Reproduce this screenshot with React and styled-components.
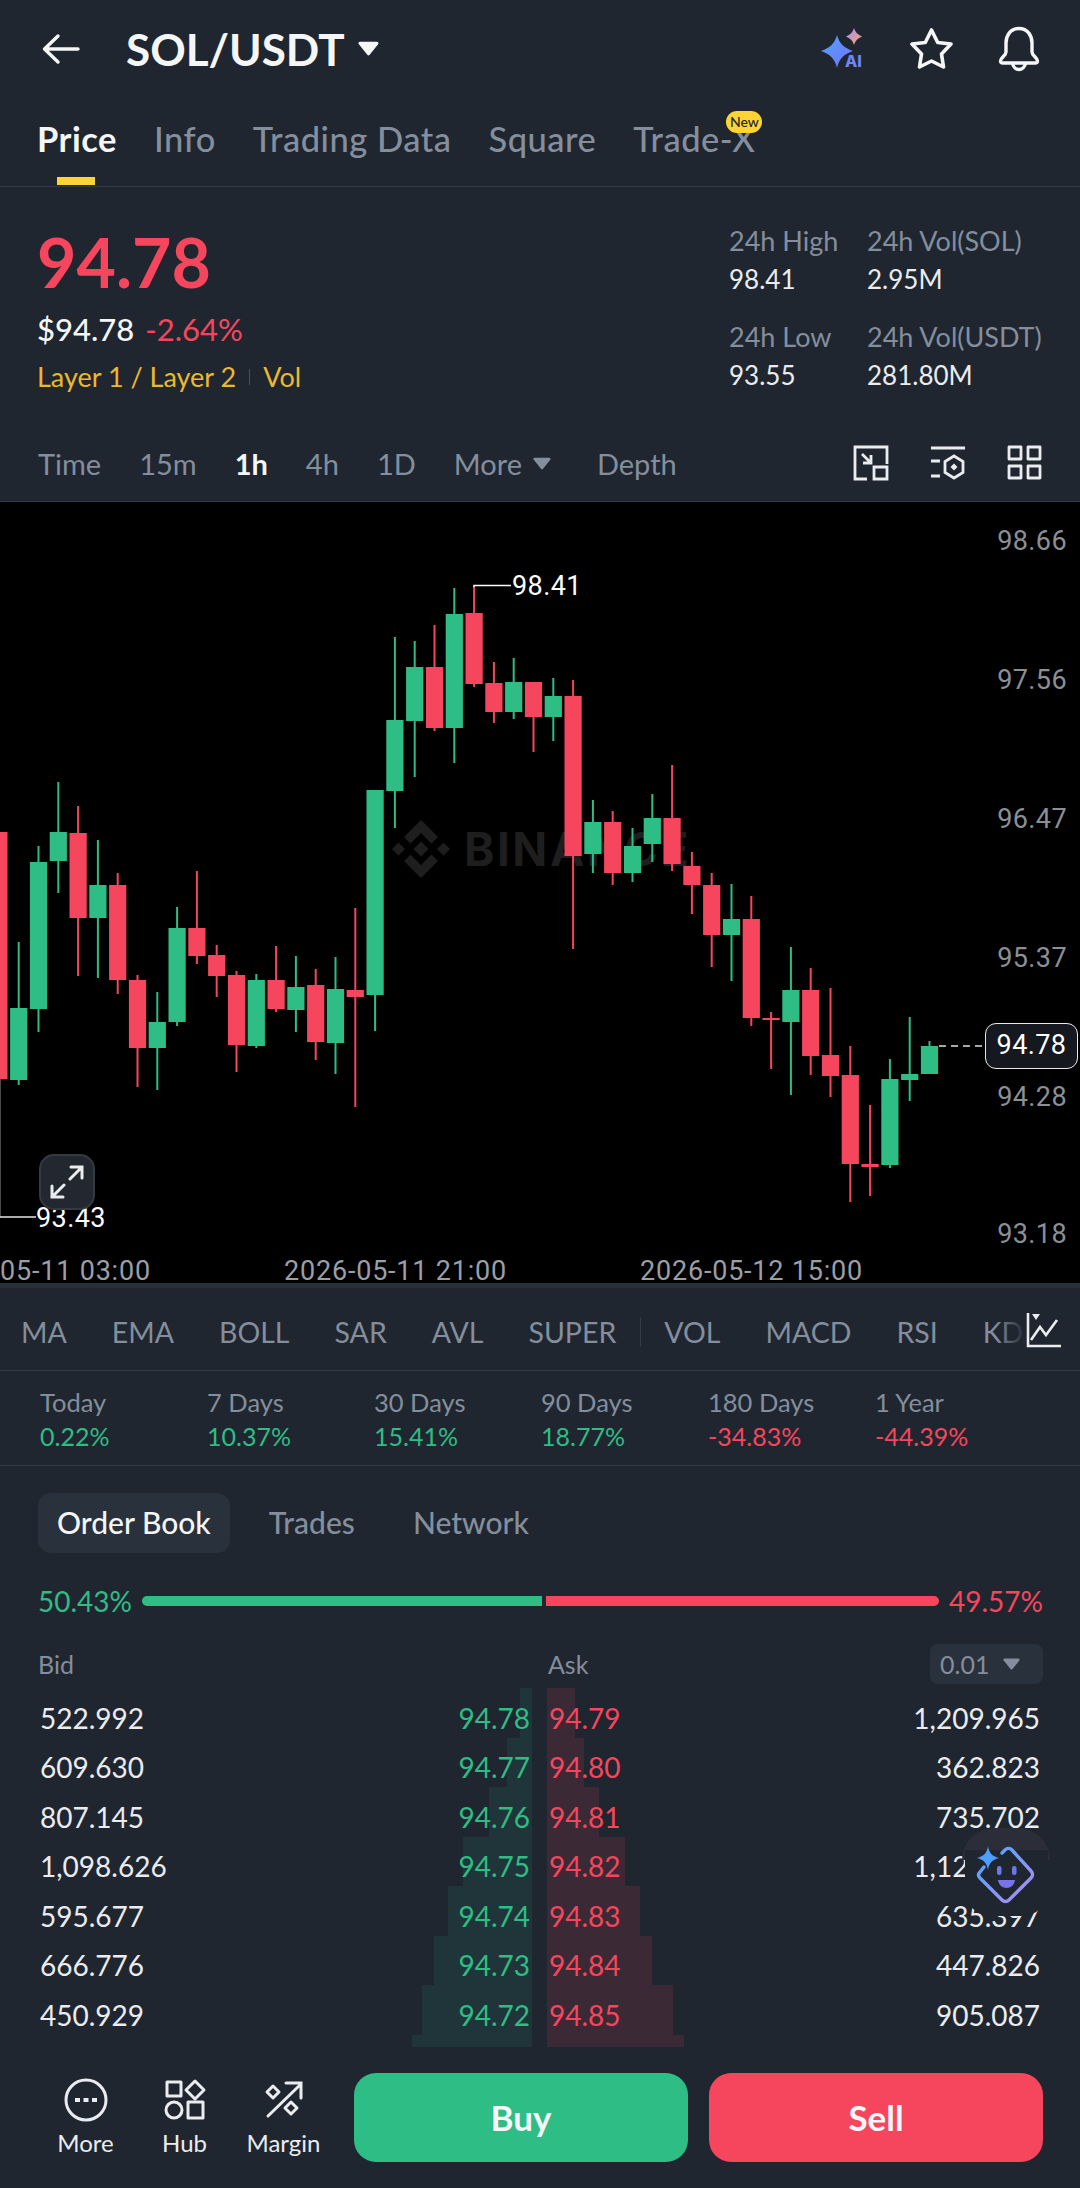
import React from "react";
import styled, { createGlobalStyle } from "styled-components";

const BG = "#1f2630";
const LINE = "#333b47";
const GREY = "#848e9c";
const WHITE = "#eaecef";
const GREEN = "#2ebd85";
const RED = "#f6465d";

const GlobalStyle = createGlobalStyle`
  html, body { margin: 0; padding: 0; background: ${BG}; }
  * { box-sizing: border-box; }
`;

const Page = styled.div`
  width: 1080px;
  height: 2188px;
  overflow: hidden;
  background: ${BG};
  color: ${WHITE};
  font-family: Lato, "Noto Sans", sans-serif;
  display: flex;
  flex-direction: column;
`;

/* header */
const Header = styled.header`
  height: 97px;
  display: flex;
  align-items: center;
  padding: 0 38px 0 42px;
`;
const Title = styled.h1`
  margin: 0 0 0 46px;
  font-size: 44px;
  font-weight: 700;
  color: #f5f6f7;
`;
const Caret = styled.svg`
  display: block;
  margin-left: ${(p) => p.$gap || 0}px;
`;
const HeaderIcons = styled.div`
  margin-left: auto;
  display: flex;
  align-items: center;
`;
const TopTabs = styled.nav`
  height: 90px;
  display: flex;
  align-items: center;
  gap: 37px;
  padding: 0 37px 6px;
  border-bottom: 1px solid ${LINE};
`;
const TopTab = styled.div`
  position: relative;
  font-size: 34.5px;
  letter-spacing: 0.5px;
  font-weight: ${(p) => (p.$active ? 700 : 500)};
  color: ${(p) => (p.$active ? "#f5f6f7" : GREY)};
  &::after {
    content: "";
    display: ${(p) => (p.$active ? "block" : "none")};
    position: absolute;
    left: 20px;
    width: 38px;
    height: 8px;
    bottom: -26px;
    background: #fcd535;
  }
`;
const NewBadge = styled.span`
  position: absolute;
  top: -7px;
  right: -7px;
  width: 36px;
  height: 22px;
  border-radius: 11px;
  background: #fcd535;
  color: #202630;
  font-size: 14px;
  font-weight: 500;
  letter-spacing: 0;
  line-height: 22px;
  text-align: center;
`;

/* price summary */
const Summary = styled.section`
  height: 240px;
  padding: 40px 37px 0 37px;
  display: flex;
  justify-content: space-between;
  align-items: flex-start;
`;
const BigPrice = styled.div`
  font-size: 68px;
  font-weight: 700;
  line-height: 70px;
  color: ${RED};
`;
const SubLine = styled.div`
  margin-top: 14px;
  display: flex;
  gap: 11px;
  font-size: 31px;
  line-height: 36px;
`;
const Usd = styled.span`
  color: #f5f6f7;
  font-weight: 500;
`;
const Change = styled.span`
  color: ${RED};
`;
const TagLine = styled.div`
  margin-top: 12px;
  display: flex;
  align-items: center;
  font-size: 27px;
  line-height: 36px;
  color: #ecb92e;
`;
const TagSep = styled.span`
  width: 1px;
  height: 16px;
  margin: 0 13px;
  background: #4a4f55;
`;
const Stats = styled.div`
  margin-top: -2px;
  display: grid;
  grid-template-columns: 138px 176px;
  row-gap: 26px;
`;
const StatLabel = styled.div`
  font-size: 27px;
  line-height: 32px;
  color: ${GREY};
  white-space: nowrap;
`;
const StatValue = styled.div`
  margin-top: 6px;
  font-size: 26px;
  line-height: 32px;
  color: ${WHITE};
`;

/* time selector */
const TimeBar = styled.div`
  height: 75px;
  padding: 0 38px 2px 38px;
  display: flex;
  align-items: center;
  gap: 38px;
  border-bottom: 1px solid ${LINE};
  font-size: 29px;
`;
const TimeItem = styled.div`
  display: flex;
  align-items: center;
  gap: 11px;
  margin-left: ${(p) => p.$offset || 0}px;
  color: ${(p) => (p.$active ? "#f5f6f7" : GREY)};
  font-weight: ${(p) => (p.$active ? 700 : 400)};
`;
const TimeIcons = styled.div`
  margin-left: auto;
  display: flex;
  gap: 41px;
  align-items: center;
`;

/* chart */
const ChartWrap = styled.div`
  position: relative;
  height: 781px;
  background: #000;
  overflow: hidden;
`;
const ChartSvg = styled.svg`
  display: block;
`;
const AxisText = styled.text`
  font-family: Roboto, sans-serif;
  font-size: 27px;
  letter-spacing: ${(p) => p.$spacing || 0.4}px;
  fill: ${(p) => p.$fill || "#8c8f94"};
`;
const WatermarkText = styled.text`
  font-family: Inter, sans-serif;
  font-size: 46px;
  font-weight: 700;
  letter-spacing: 2.5px;
  fill: #1e1e1e;
`;
const LastPrice = styled.div`
  position: absolute;
  left: 985px;
  top: 521px;
  width: 93px;
  height: 46px;
  border: 1.5px solid #e8e8e8;
  border-radius: 11px;
  background: #15191f;
  color: #fff;
  font-family: Roboto, sans-serif;
  font-size: 27px;
  letter-spacing: 0.4px;
  line-height: 43px;
  text-align: center;
`;
const ExpandButton = styled.div`
  position: absolute;
  left: 39px;
  top: 652px;
  width: 56px;
  height: 56px;
  border-radius: 15px;
  border: 2px solid #353a42;
  background: #23272f;
  display: flex;
  align-items: center;
  justify-content: center;
`;

/* indicators */
const IndicatorBar = styled.div`
  position: relative;
  height: 88px;
  padding: 5px 0 0 21px;
  display: flex;
  align-items: center;
  gap: 45px;
  overflow: hidden;
  border-top: 5px solid #282f38;
  border-bottom: 1px solid ${LINE};
  font-size: 28.5px;
  color: ${GREY};
  white-space: nowrap;
`;
const IndicatorSep = styled.span`
  flex: none;
  width: 1px;
  height: 30px;
  margin: 0 -21.5px;
  background: ${LINE};
`;
const IndicatorEnd = styled.div`
  position: absolute;
  right: 0;
  top: 0;
  bottom: 0;
  width: 84px;
  padding: 1px 0 0 30px;
  display: flex;
  align-items: center;
  background: linear-gradient(90deg, rgba(31, 38, 48, 0), ${BG} 30px);
`;

/* returns */
const Returns = styled.div`
  height: 95px;
  padding: 14px 0 0 40px;
  display: grid;
  grid-template-columns: repeat(6, 167px);
  border-bottom: 1px solid ${LINE};
`;
const ReturnLabel = styled.div`
  font-size: 25.5px;
  line-height: 34px;
  color: ${GREY};
`;
const ReturnValue = styled.div`
  font-size: 25px;
  line-height: 34px;
  color: ${(p) => (p.$down ? RED : GREEN)};
`;

/* order book */
const BookTabs = styled.div`
  height: 88px;
  padding: 27px 38px 0;
  display: flex;
  align-items: flex-start;
  gap: 20px;
`;
const BookTab = styled.div`
  height: 60px;
  padding: 0 19px;
  border-radius: 13px;
  background: ${(p) => (p.$active ? "#29313d" : "transparent")};
  color: ${(p) => (p.$active ? "#f5f6f7" : GREY)};
  font-size: 30px;
  font-weight: 500;
  line-height: 58px;
`;
const Ratio = styled.div`
  margin-top: 29px;
  padding: 0 37px 0 38px;
  height: 36px;
  display: flex;
  align-items: center;
  font-size: 28px;
`;
const RatioText = styled.span`
  color: ${(p) => p.$color};
`;
const RatioBar = styled.div`
  flex: 1;
  margin: 0 10px;
  display: flex;
  gap: 4px;
`;
const RatioFill = styled.div`
  height: 10px;
  background: ${(p) => p.$color};
  border-radius: ${(p) => (p.$left ? "5px 0 0 5px" : "0 5px 5px 0")};
`;
const BookHead = styled.div`
  margin-top: 25px;
  height: 40px;
  padding: 0 37px 0 38px;
  display: flex;
  align-items: center;
  font-size: 25px;
  color: ${GREY};
`;
const AskHead = styled.span`
  margin-left: 474px;
  margin-right: auto;
`;
const Select = styled.div`
  width: 113px;
  height: 40px;
  padding: 0 10px;
  border-radius: 8px;
  background: #29313d;
  display: flex;
  align-items: center;
  gap: 14px;
`;
const Book = styled.div`
  position: relative;
  margin-top: 9px;
  height: 354px;
  padding: 0 40px 0 40px;
`;
const DepthLayer = styled.div`
  position: absolute;
  left: 0;
  right: 0;
  top: -5px;
  bottom: 0;
  overflow: hidden;
`;
const DepthRow = styled.div`
  position: relative;
  height: 49.5px;
`;
const DepthBar = styled.div`
  position: absolute;
  top: 0;
  bottom: 0;
  ${(p) => (p.$ask ? "left: 547px;" : "right: 548px;")}
  background: ${(p) => (p.$ask ? "rgba(246, 70, 93, 0.13)" : "rgba(46, 189, 133, 0.1)")};
`;
const BookRow = styled.div`
  position: relative;
  height: 49.5px;
  display: grid;
  grid-template-columns: 490px 491px;
  column-gap: 19px;
  align-items: center;
  font-size: 28px;
`;
const BookSide = styled.div`
  display: flex;
  justify-content: space-between;
`;
const BookPrice = styled.span`
  color: ${(p) => (p.$ask ? RED : GREEN)};
`;
const BotDome = styled.div`
  position: absolute;
  left: 962px;
  top: 1828px;
  width: 88px;
  height: 32px;
  border-radius: 44px 44px 0 0;
  background: #2b2e38;
`;
const BotBack = styled.div`
  position: absolute;
  left: 965px;
  top: 1850px;
  width: 83px;
  height: 66px;
  border-radius: 0 0 26px 26px;
  background: ${BG};
`;
const BotIcon = styled.svg`
  position: absolute;
  left: 976px;
  top: 1843px;
`;

/* footer */
const Footer = styled.footer`
  flex: 1;
  padding: 26px 37px 0 36px;
  display: flex;
`;
const Action = styled.div`
  width: 99px;
  padding-top: 5px;
  display: flex;
  flex-direction: column;
  align-items: center;
  font-size: 24px;
  line-height: 28px;
  color: ${WHITE};
`;
const ActionIcon = styled.svg`
  display: block;
  margin-bottom: 7px;
`;
const TradeButton = styled.div`
  flex: 1;
  height: 89px;
  margin-left: ${(p) => p.$gap}px;
  border-radius: 22px;
  background: ${(p) => p.$color};
  color: #f5f6f7;
  font-size: 35px;
  font-weight: 700;
  line-height: 89px;
  text-align: center;
`;

// [type, wick top, wick bottom, body top, body bottom], newest first
const candles = [
  ["g", 1041, 1074, 1046, 1074],
  ["g", 1017, 1101, 1074, 1080],
  ["g", 1059, 1168, 1079, 1165],
  ["r", 1105, 1196, 1164, 1167],
  ["r", 1046, 1202, 1075, 1164],
  ["r", 988, 1097, 1055, 1076],
  ["r", 968, 1075, 990, 1056],
  ["g", 947, 1095, 990, 1022],
  ["r", 1012, 1069, 1018, 1020],
  ["r", 896, 1026, 919, 1018],
  ["g", 884, 981, 919, 935],
  ["r", 873, 967, 885, 935],
  ["r", 852, 914, 866, 885],
  ["r", 765, 871, 818, 864],
  ["g", 794, 862, 818, 844],
  ["g", 828, 882, 846, 873],
  ["r", 811, 885, 822, 873],
  ["g", 800, 873, 822, 854],
  ["r", 680, 949, 696, 856],
  ["g", 678, 741, 696, 717],
  ["r", 682, 752, 682, 717],
  ["g", 658, 719, 682, 712],
  ["r", 662, 723, 683, 712],
  ["r", 586, 687, 613, 684],
  ["g", 588, 763, 614, 728],
  ["r", 625, 731, 667, 728],
  ["g", 641, 777, 667, 721],
  ["g", 637, 828, 720, 791],
  ["g", 790, 1031, 790, 995],
  ["r", 908, 1107, 990, 997],
  ["g", 957, 1074, 989, 1043],
  ["r", 969, 1060, 985, 1042],
  ["g", 956, 1032, 987, 1010],
  ["r", 946, 1012, 980, 1009],
  ["g", 974, 1048, 980, 1046],
  ["r", 971, 1072, 975, 1045],
  ["r", 945, 997, 955, 976],
  ["r", 871, 964, 928, 956],
  ["g", 907, 1026, 928, 1022],
  ["g", 992, 1090, 1022, 1048],
  ["r", 975, 1087, 980, 1048],
  ["r", 873, 994, 885, 980],
  ["g", 840, 978, 885, 918],
  ["r", 806, 976, 833, 918],
  ["g", 782, 893, 832, 861],
  ["g", 846, 1032, 862, 1009],
  ["g", 942, 1085, 1008, 1080],
  ["r", 832, 1079, 832, 1079],
];

const axisLabels = [
  ["98.66", 540],
  ["97.56", 679],
  ["96.47", 818],
  ["95.37", 957],
  ["94.28", 1096],
  ["93.18", 1233],
];

const bookRows = [
  ["522.992", "94.78", "94.79", "1,209.965"],
  ["609.630", "94.77", "94.80", "362.823"],
  ["807.145", "94.76", "94.81", "735.702"],
  ["1,098.626", "94.75", "94.82", "1,127.481"],
  ["595.677", "94.74", "94.83", "635.397"],
  ["666.776", "94.73", "94.84", "447.826"],
  ["450.929", "94.72", "94.85", "905.087"],
];

const depthWidths = [
  [12, 28],
  [25, 37],
  [43, 52],
  [69, 78],
  [84, 93],
  [98, 105],
  [110, 126],
  [120, 137],
];

const returns = [
  ["Today", "0.22%"],
  ["7 Days", "10.37%"],
  ["30 Days", "15.41%"],
  ["90 Days", "18.77%"],
  ["180 Days", "-34.83%", true],
  ["1 Year", "-44.39%", true],
];

const Triangle = ({ w, h, color, gap }) => (
  <Caret $gap={gap} width={w} height={h} viewBox="0 0 20 14">
    <path d="M2 2h16L10 12z" fill={color} stroke={color} strokeWidth="3" strokeLinejoin="round" />
  </Caret>
);

const Chart = () => (
  <ChartSvg width="1080" height="781" viewBox="0 502 1080 781">
    {/* watermark sits under the candles */}
    <g fill="#1e1e1e" transform="translate(421 849)">
      <path d="M0-29L17-12 10.5-5.5 0-16-10.5-5.5-17-12Z" />
      <path d="M0 29L17 12 10.5 5.5 0 16-10.5 5.5-17 12Z" />
      <path d="M0-7.5L7.5 0 0 7.5-7.5 0ZM-29 0L-22.5-6.5-16 0-22.5 6.5ZM16 0L22.5-6.5 29 0 22.5 6.5Z" />
    </g>
    <WatermarkText x="464" y="866">BINANCE</WatermarkText>

    {candles.map(([type, wt, wb, bt, bb], i) => {
      const x = 929.5 - 19.8 * i;
      const fill = type === "g" ? GREEN : RED;
      return (
        <g key={i} fill={fill}>
          <rect x={x - 1} y={wt} width="2" height={wb - wt} />
          <rect x={x - 8.6} y={bt} width="17.2" height={bb - bt} />
        </g>
      );
    })}

    <path d="M0.5 1079V1217" fill="none" stroke="#4a4a4a" strokeWidth="1" />
    <path d="M0 1217H36" fill="none" stroke="#fff" strokeWidth="1.5" opacity="0.9" />
    <path d="M474 587V585.5H511" fill="none" stroke="#fff" strokeWidth="1.5" />
    <path d="M939 1046H983" fill="none" stroke="#ddd" strokeWidth="1.5" strokeDasharray="7 5" />

    <AxisText x="512" y="595" $fill="#fff">98.41</AxisText>
    <AxisText x="36" y="1227" $fill="#fff">93.43</AxisText>
    {axisLabels.map(([label, y]) => (
      <AxisText key={label} x="1067" y={y + 10} textAnchor="end">{label}</AxisText>
    ))}
    <AxisText x="0" y="1280" $fill="#9a9fa6" $spacing={0.8}>05-11 03:00</AxisText>
    <AxisText x="284" y="1280" $fill="#9a9fa6" $spacing={0.8}>2026-05-11 21:00</AxisText>
    <AxisText x="640" y="1280" $fill="#9a9fa6" $spacing={0.8}>2026-05-12 15:00</AxisText>
  </ChartSvg>
);

export default function App() {
  return (
    <Page>
      <GlobalStyle />
      <Header>
        <svg width="38" height="32" viewBox="0 0 38 32" fill="none" stroke="#f5f6f7" strokeWidth="3.4" strokeLinecap="round" strokeLinejoin="round">
          <path d="M36 16H3M16 3L2.5 16 16 29" />
        </svg>
        <Title>SOL/USDT</Title>
        <Triangle w={21} h={15} color="#f5f6f7" gap={13} />
        <HeaderIcons>
          <svg width="48" height="42" viewBox="0 0 48 42">
            <defs>
              <linearGradient id="aiA" x1="0" y1="0" x2="1" y2="1">
                <stop offset="0" stopColor="#4aa8ff" />
                <stop offset="1" stopColor="#7d6cf6" />
              </linearGradient>
              <linearGradient id="aiB" x1="0" y1="0" x2="1" y2="1">
                <stop offset="0" stopColor="#a98cf5" />
                <stop offset="1" stopColor="#f4a96a" />
              </linearGradient>
            </defs>
            <path d="M17 7C19 15 24 20 33 23 24 26 19 31 17 40 15 31 10 26 1 23 10 20 15 15 17 7Z" fill="url(#aiA)" />
            <path d="M34 0C35 4 38 7 42 8.5 38 10 35 13 34 17 33 13 30 10 26 8.5 30 7 33 4 34 0Z" fill="url(#aiB)" />
            <text x="25" y="39" fontFamily="Inter, sans-serif" fontSize="16" fontWeight="800" fill="#6f86f5">AI</text>
          </svg>
          <svg style={{ marginLeft: 42 }} width="44" height="44" viewBox="0 0 44 44" fill="none" stroke="#f5f6f7" strokeWidth="3.6" strokeLinejoin="round">
            <path d="M21.5 3L27.7 15.5 41 17 31.5 26.9 33.5 40 21.5 34 9.5 40 11.5 26.9 2 17 15.3 15.5Z" />
          </svg>
          <svg style={{ marginLeft: 44 }} width="44" height="46" viewBox="0 0 44 46" fill="none" stroke="#f5f6f7" strokeWidth="3.4" strokeLinejoin="round">
            <path d="M21 2.5C12 2.5 8 10 8 17V26C8 30 2.5 31.5 2.5 35 2.5 36.5 3.5 37 5 37H37C38.5 37 39.5 36.5 39.5 35 39.5 31.5 34 30 34 26V17C34 10 30 2.5 21 2.5Z" />
            <path d="M14.5 37C15 41 18 43.5 21 43.5S27 41 27.5 37" />
          </svg>
        </HeaderIcons>
      </Header>

      <TopTabs>
        <TopTab $active>Price</TopTab>
        <TopTab>Info</TopTab>
        <TopTab>Trading Data</TopTab>
        <TopTab>Square</TopTab>
        <TopTab>
          Trade-X
          <NewBadge>New</NewBadge>
        </TopTab>
      </TopTabs>

      <Summary>
        <div>
          <BigPrice>94.78</BigPrice>
          <SubLine>
            <Usd>$94.78</Usd>
            <Change>-2.64%</Change>
          </SubLine>
          <TagLine>
            Layer 1 / Layer 2
            <TagSep />
            Vol
          </TagLine>
        </div>
        <Stats>
          <div>
            <StatLabel>24h High</StatLabel>
            <StatValue>98.41</StatValue>
          </div>
          <div>
            <StatLabel>24h Vol(SOL)</StatLabel>
            <StatValue>2.95M</StatValue>
          </div>
          <div>
            <StatLabel>24h Low</StatLabel>
            <StatValue>93.55</StatValue>
          </div>
          <div>
            <StatLabel>24h Vol(USDT)</StatLabel>
            <StatValue>281.80M</StatValue>
          </div>
        </Stats>
      </Summary>

      <TimeBar>
        <TimeItem>Time</TimeItem>
        <TimeItem>15m</TimeItem>
        <TimeItem $active>1h</TimeItem>
        <TimeItem>4h</TimeItem>
        <TimeItem>1D</TimeItem>
        <TimeItem>
          More
          <Triangle w={18} h={13} color={GREY} />
        </TimeItem>
        <TimeItem $offset={8}>Depth</TimeItem>
        <TimeIcons>
          <svg width="36" height="36" viewBox="0 0 36 36" fill="none" stroke={WHITE} strokeWidth="2.8">
            <path d="M14 34H2V2H34V19M21 22H34V34H21Z" />
            <path d="M9 9L18 18M18 10V18H10" />
          </svg>
          <svg width="36" height="36" viewBox="0 0 36 36" fill="none" stroke={WHITE} strokeWidth="2.8">
            <path d="M1 3H35M1 16H10M1 31H10" />
            <path d="M24 11L33 16.5V27.5L24 33 15 27.5V16.5Z" />
            <path d="M24 18.5L27.5 22 24 25.5 20.5 22Z" fill={WHITE} stroke="none" />
          </svg>
          <svg width="35" height="36" viewBox="0 0 35 36" fill="none" stroke={WHITE} strokeWidth="2.8" strokeLinejoin="round">
            <path d="M2 2H14V14H2ZM21 2H33V14H21ZM2 21H14V33H2ZM21 21H33V33H21Z" />
          </svg>
        </TimeIcons>
      </TimeBar>

      <ChartWrap>
        <Chart />
        <LastPrice>94.78</LastPrice>
        <ExpandButton>
          <svg width="34" height="34" viewBox="0 0 34 34" fill="none" stroke={WHITE} strokeWidth="3" strokeLinecap="round">
            <path d="M20 14L32 2M21 2H32V13M14 20L2 32M2 21V32H13" />
          </svg>
        </ExpandButton>
      </ChartWrap>

      <IndicatorBar>
        <span>MA</span>
        <span>EMA</span>
        <span>BOLL</span>
        <span>SAR</span>
        <span>AVL</span>
        <span>SUPER</span>
        <IndicatorSep />
        <span>VOL</span>
        <span>MACD</span>
        <span>RSI</span>
        <span>KDJ</span>
        <IndicatorEnd>
          <svg width="36" height="36" viewBox="0 0 36 36" fill="none" stroke={WHITE} strokeWidth="2.6">
            <path d="M2 1V34H35" />
            <path d="M5 28L14 15 20 23 31 8" />
            <path d="M6 2H14L10 8Z" fill={WHITE} stroke="none" />
          </svg>
        </IndicatorEnd>
      </IndicatorBar>

      <Returns>
        {returns.map(([label, value, down]) => (
          <div key={label}>
            <ReturnLabel>{label}</ReturnLabel>
            <ReturnValue $down={down}>{value}</ReturnValue>
          </div>
        ))}
      </Returns>

      <BookTabs>
        <BookTab $active>Order Book</BookTab>
        <BookTab>Trades</BookTab>
        <BookTab>Network</BookTab>
      </BookTabs>

      <Ratio>
        <RatioText $color={GREEN}>50.43%</RatioText>
        <RatioBar>
          <RatioFill $left $color={GREEN} style={{ width: "50.43%" }} />
          <RatioFill $color={RED} style={{ width: "49.57%" }} />
        </RatioBar>
        <RatioText $color={RED}>49.57%</RatioText>
      </Ratio>

      <BookHead>
        <span>Bid</span>
        <AskHead>Ask</AskHead>
        <Select>
          0.01
          <Triangle w={17} h={12} color={GREY} />
        </Select>
      </BookHead>

      <Book>
        <DepthLayer>
          {depthWidths.map(([bid, ask], i) => (
            <DepthRow key={i}>
              <DepthBar style={{ width: bid }} />
              <DepthBar $ask style={{ width: ask }} />
            </DepthRow>
          ))}
        </DepthLayer>
        {bookRows.map(([bidQty, bid, ask, askQty]) => (
          <BookRow key={bid}>
            <BookSide>
              <span>{bidQty}</span>
              <BookPrice>{bid}</BookPrice>
            </BookSide>
            <BookSide>
              <BookPrice $ask>{ask}</BookPrice>
              <span>{askQty}</span>
            </BookSide>
          </BookRow>
        ))}
      </Book>

      <BotDome />
      <BotBack />
      <BotIcon width="60" height="62" viewBox="0 0 60 62" fill="none">
        <defs>
          <linearGradient id="botG" x1="0" y1="0" x2="1" y2="1">
            <stop offset="0" stopColor="#4aa8ff" />
            <stop offset="1" stopColor="#b18bf0" />
          </linearGradient>
        </defs>
        <path d="M8 24L4 29C2 31 2 33 4 35L26 57C28 59 31 59 33 57L55 35C57 33 57 30 55 28L36 7C34 5 31 5 29 7L26 10" stroke="url(#botG)" strokeWidth="3.4" strokeLinecap="round" />
        <path d="M12 3C13 10 16 13 23 15 16 17 13 20 12 27 11 20 8 17 1 15 8 13 11 10 12 3Z" fill="#4f9dff" />
        <rect x="21" y="23" width="4.5" height="9" rx="2.2" fill="#6e79e8" />
        <rect x="36" y="23" width="4.5" height="9" rx="2.2" fill="#6e79e8" />
        <path d="M22 37H39C38.5 42 34.5 45 30.5 45S22.5 42 22 37Z" fill="#7a72ea" />
      </BotIcon>

      <Footer>
        <Action>
          <ActionIcon width="44" height="44" viewBox="0 0 44 44" fill="none" stroke={WHITE} strokeWidth="3">
            <circle cx="22" cy="22" r="20" />
            <path d="M11 22h5M19.5 22h5M28 22h5" strokeWidth="4" />
          </ActionIcon>
          More
        </Action>
        <Action>
          <ActionIcon width="44" height="44" viewBox="0 0 44 44" fill="none" stroke={WHITE} strokeWidth="3" strokeLinejoin="round">
            <path d="M4 4H18V18H4Z" />
            <path d="M32 3L41 12 32 21 23 12Z" />
            <circle cx="11" cy="32" r="8" />
            <path d="M25 24H40V40H25Z" />
          </ActionIcon>
          Hub
        </Action>
        <Action>
          <ActionIcon width="44" height="44" viewBox="0 0 44 44" fill="none" stroke={WHITE} strokeWidth="3" strokeLinecap="round">
            <path d="M6 38L39 6M24 5H39V20" />
            <path d="M11 8L17 14 11 20 5 14ZM29 24L35 30 29 36 23 30Z" strokeLinejoin="round" />
          </ActionIcon>
          Margin
        </Action>
        <TradeButton $gap={21} $color={GREEN}>Buy</TradeButton>
        <TradeButton $gap={21} $color={RED}>Sell</TradeButton>
      </Footer>
    </Page>
  );
}
